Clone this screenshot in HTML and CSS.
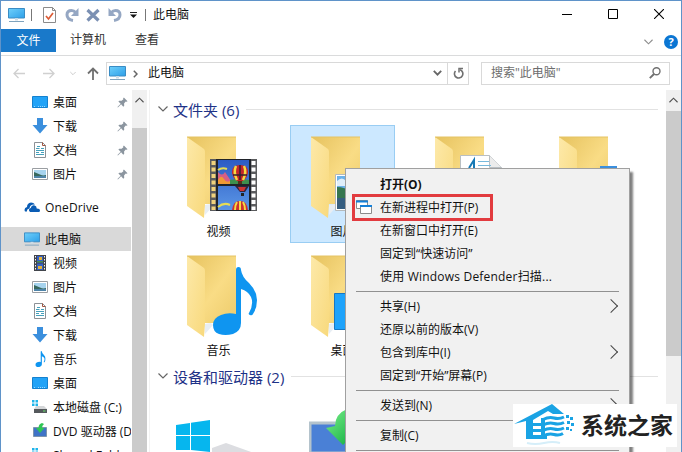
FILE: index.html
```
<!DOCTYPE html>
<html lang="zh-CN">
<head>
    <meta charset="UTF-8">
    <meta name="viewport" content="width=device-width, initial-scale=1.0">
    <title>此电脑</title>
    <link rel="stylesheet" href="styles.css">
</head>
<body>
<!-- shared icons -->
<svg class="defs" width="0" height="0">
    <defs>
        <linearGradient id="gBack" x1="0" y1="0" x2="1" y2="1">
            <stop offset="0" stop-color="#e6c25e"/><stop offset=".55" stop-color="#f9dc85"/><stop offset="1" stop-color="#edcb6b"/>
        </linearGradient>
        <linearGradient id="gFront" x1="0" y1="0" x2="1" y2="1">
            <stop offset="0" stop-color="#fde9a9"/><stop offset="1" stop-color="#f8d97c"/>
        </linearGradient>
        <linearGradient id="gScreen" x1="0" y1="0" x2="1" y2="1">
            <stop offset="0" stop-color="#6fd0fb"/><stop offset="1" stop-color="#2d9fe8"/>
        </linearGradient>
        <linearGradient id="gSky" x1="0" y1="0" x2="0" y2="1">
            <stop offset="0" stop-color="#2c5cc4"/><stop offset="1" stop-color="#5b96e6"/>
        </linearGradient>
        <linearGradient id="gGreen" x1="0" y1="0" x2="1" y2="1">
            <stop offset="0" stop-color="#7df08c"/><stop offset="1" stop-color="#06a83a"/>
        </linearGradient>
    </defs>
    <symbol id="folder" viewBox="0 0 72 84">
        <path d="M17 69l7-1 2 2-8 9z" fill="#e8eef4"/>
        <path d="M0 1h49v67H17z" fill="url(#gBack)"/>
        <path d="M0 1l17 12q1 1 1 3v52l-1 14L0 70z" fill="url(#gFront)"/>
        <path d="M0 1h49" stroke="#e4c365"/>
    </symbol>
    <symbol id="pc" viewBox="0 0 17 16">
        <path d="M.5 1.500h16v9.500H.5z" fill="url(#gScreen)" stroke="#3a8cc4"/>
        <path d="M7 11h3v2.500H7z" fill="#cbdbe6"/>
        <path d="M1 14.500h15" stroke="#7fa3bd"/>
    </symbol>
    <symbol id="desktop" viewBox="0 0 16 16">
        <path d="M.5 2.500h15v11H.5z" fill="#22a3f7" stroke="#1481cf"/>
        <path d="M2 12.500h2M6 12.500h8" stroke="#9ad8ff" stroke-dasharray="1 1"/>
    </symbol>
    <symbol id="download" viewBox="0 0 16 16">
        <path d="M5 0h6v7h4.500L8 15.500.5 7H5z" fill="#3b8fdd"/>
    </symbol>
    <symbol id="doc" viewBox="0 0 16 16">
        <path d="M2.500.5h8l3 3v12h-11z" fill="#fff" stroke="#8c9196"/>
        <path d="M10.500.5v3h3" fill="none" stroke="#a0543f"/>
        <path d="M5 4.500h3M4 6.500h3.500M9 6.500h3M4 8.500h8M4 10.500h3M9 10.500h3M4 12.500h8" stroke="#46a0bb"/>
    </symbol>
    <symbol id="picture" viewBox="0 0 16 16">
        <path d="M.5 2.500h15v11H.5z" fill="#fff" stroke="#9a9ea2"/>
        <path d="M2 4h12v8H2z" fill="#a6d3ee"/>
        <path d="M2 6q3 1 6 2.500t6 .5v3H2z" fill="#37685e"/>
        <path d="M2 10h12v2H2z" fill="#4d83a8"/>
    </symbol>
    <symbol id="video" viewBox="0 0 16 16">
        <path d="M2 0h12v16H2z" fill="#42454c"/>
        <path d="M3.500 1v15M12.500 1v15" stroke="#f3f3f3" stroke-dasharray="1.500 1.500"/>
        <path d="M5 1h6v6.500H5zM5 8.500h6V15H5z" fill="#3561c8"/>
        <path d="M7 2h3v3H7zM6 11h4v3H6z" fill="#e3b43a"/>
        <path d="M5 6h6v1.500H5z" fill="#4a8b52"/>
    </symbol>
    <symbol id="note" viewBox="0 0 44 68">
        <path d="M23 3q0-3 2.500-3T28 3q1 7 8 13 8 8 8 17 0 8-4 14-1 2-3 1t-1-2q5-9 2-16-3-6-10-8v34q0 8-8 11-8 2-14 0T0 58q0-7 8-10 7-3 15-1z" fill="#0f95f0"/>
    </symbol>
    <symbol id="pin" viewBox="0 0 12 12">
        <path d="M7.500.5l4 4-1 .8-1-.3-1.800 2 .2 2.500-1 1L4.500 8 1 11.500l-.5-.5L4 7.300 1.500 5l1-1 2.500.2 2-1.700-.4-1z" fill="#8b959f"/>
    </symbol>
    <symbol id="drive" viewBox="0 0 16 16">
        <path d="M0 1h2.500v2.500H0zM3.500 1H6v2.500H3.500zM0 4.500h2.500V7H0zM3.500 4.500H6V7H3.500z" fill="#1fb4ea"/>
        <path d="M4 7h8l3 3H2z" fill="#d4d6d8"/>
        <path d="M2 10h13v4H2z" fill="#55595c"/>
        <path d="M11 12h2.500" stroke="#66e26c"/>
    </symbol>
    <symbol id="dvd" viewBox="0 0 16 16">
        <path d="M1.500 4.500h13v9h-13z" fill="#3f73c6" stroke="#7d94ad"/>
        <path d="M10 0Q6.500 1 6.500 5H4l4 5 4.500-5H10q0-2.500 2-4z" fill="#2fc654"/>
    </symbol>
    <symbol id="chev" viewBox="0 0 10 6">
        <path d="M.5.5L5 5 9.500.5" fill="none" stroke="currentColor" stroke-width="1.200"/>
    </symbol>
</svg>

<div class="window">
    <header class="titlebar">
        <svg class="title-pc"><use href="#pc"/></svg>
        <span class="divider"></span>
        <svg class="title-check" viewBox="0 0 13 16">
            <path d="M.5.5h9l3 3v12H.5z" fill="#fff" stroke="#8b8b8b"/>
            <path d="M9.500.5v3h3" fill="none" stroke="#8b8b8b"/>
            <path d="M3 9l2.500 3L10 6" fill="none" stroke="#dc5b35" stroke-width="1.700"/>
        </svg>
        <svg class="title-redo" viewBox="0 0 14 14">
            <path d="M8 12.500Q2 11.500 2 6.800 2 2.500 6.500 2.500q2.500 0 4 2" fill="none" stroke="#95a7c3" stroke-width="3"/>
            <path d="M13.500 0v8H6z" fill="#95a7c3"/>
        </svg>
        <svg class="title-x" viewBox="0 0 14 14"><path d="M1.500 2l11 10.500M12.500 2l-11 10.500" stroke="#7b90b3" stroke-width="3.200"/></svg>
        <svg class="title-undo" viewBox="0 0 14 14">
            <path d="M6 12.500q6-1 6-5.700 0-4.300-4.500-4.300-2.500 0-4 2" fill="none" stroke="#95a7c3" stroke-width="3"/>
            <path d="M.5 0v8H8z" fill="#95a7c3"/>
        </svg>
        <svg class="title-drop" viewBox="0 0 7 7"><path d="M0 .5h7" stroke="#222"/><path d="M0 2.500h7L3.500 6z" fill="#111"/></svg>
        <span class="divider"></span>
        <span class="title">此电脑</span>
        <div class="controls">
            <svg viewBox="0 0 10 10"><path d="M0 5.500h10" stroke="#000"/></svg>
            <svg viewBox="0 0 10 10"><path d="M.5.5h9v9h-9z" fill="none" stroke="#000"/></svg>
            <svg viewBox="0 0 10 10"><path d="M0 0l10 10M10 0L0 10" stroke="#000" stroke-width="1.100"/></svg>
        </div>
    </header>

    <nav class="ribbon">
        <span class="tab tab-file">文件</span>
        <span class="tab">计算机</span>
        <span class="tab">查看</span>
        <svg class="ribbon-toggle"><use href="#chev"/></svg>
        <span class="help">?</span>
    </nav>

    <div class="addressbar">
        <svg class="arrow-back" viewBox="0 0 12 11"><path d="M12 5.500H1M5.500 1L1 5.500 5.500 10" fill="none" stroke="#d0d0d0" stroke-width="1.300"/></svg>
        <svg class="arrow-forward" viewBox="0 0 12 11"><path d="M0 5.500h11M6.500 1L11 5.500 6.500 10" fill="none" stroke="#d0d0d0" stroke-width="1.300"/></svg>
        <svg class="arrow-recent"><use href="#chev"/></svg>
        <svg class="arrow-up" viewBox="0 0 12 13"><path d="M6 13V1.500M1 6.500l5-5 5 5" fill="none" stroke="#707070" stroke-width="1.800"/></svg>
        <div class="address">
            <svg class="address-pc"><use href="#pc"/></svg>
            <svg class="address-sep" viewBox="0 0 5 8"><path d="M.8.8L4 4 .8 7.200" fill="none" stroke="#666" stroke-width="1.500"/></svg>
            <span>此电脑</span>
            <svg class="address-drop" viewBox="0 0 9 6"><path d="M.8.8l3.700 3.900L8.200.8" fill="none" stroke="#666" stroke-width="1.800"/></svg>
            <span class="refresh"><svg viewBox="0 0 11 12"><path d="M2.500 4A4.200 4.200 0 1 0 7 2.800" fill="none" stroke="#707070" stroke-width="1.600"/><path d="M10 1.500H6v4" fill="none" stroke="#707070" stroke-width="1.500"/></svg></span>
        </div>
        <div class="search">
            <span>搜索"此电脑"</span>
            <svg viewBox="0 0 12 12"><circle cx="7.500" cy="4.300" r="3.500" fill="none" stroke="#707070" stroke-width="1.400"/><path d="M5 7L.8 11.200" stroke="#707070" stroke-width="1.900"/></svg>
        </div>
    </div>

    <div class="body">
        <aside class="sidebar">
            <div class="node sub"><svg><use href="#desktop"/></svg>桌面<svg class="pin"><use href="#pin"/></svg></div>
            <div class="node sub"><svg><use href="#download"/></svg>下载<svg class="pin"><use href="#pin"/></svg></div>
            <div class="node sub"><svg><use href="#doc"/></svg>文档<svg class="pin"><use href="#pin"/></svg></div>
            <div class="node sub"><svg><use href="#picture"/></svg>图片<svg class="pin"><use href="#pin"/></svg></div>
            <div class="node root onedrive">
                <svg viewBox="0 0 16 16"><path d="M1 12.500Q-.5 9 3 8q0-4 4-4.500 2.500 0 4 2-5-.5-5.500 4Q2.500 10 3 12.500z" fill="#0a5cb4"/><path d="M6 13q-2.500-2.500.7-4 1-3.500 4-2.500 2 .5 2 3 3.300 0 3.300 2T14 13z" fill="#0a5cb4"/></svg>OneDrive
            </div>
            <div class="node root active"><svg><use href="#pc"/></svg>此电脑</div>
            <div class="node sub"><svg><use href="#video"/></svg>视频</div>
            <div class="node sub"><svg><use href="#picture"/></svg>图片</div>
            <div class="node sub"><svg><use href="#doc"/></svg>文档</div>
            <div class="node sub"><svg><use href="#download"/></svg>下载</div>
            <div class="node sub"><svg viewBox="-10 0 60 68"><use href="#note" width="44" height="68"/></svg>音乐</div>
            <div class="node sub"><svg><use href="#desktop"/></svg>桌面</div>
            <div class="node sub"><svg><use href="#drive"/></svg>本地磁盘 (C:)</div>
            <div class="node sub"><svg><use href="#dvd"/></svg>DVD 驱动器 (D:)</div>
            <div class="node sub"><svg><use href="#drive"/></svg>Shared Folders</div>
        </aside>
        <div class="scrollbar side-scroll">
            <svg class="scroll-up"><use href="#chev"/></svg>
            <div class="thumb"></div>
        </div>

        <main class="content">
            <h2 class="group"><svg><use href="#chev"/></svg>文件夹 (6)</h2>
            <div class="tiles">
                <div class="tile">
                    <svg class="tile-icon" viewBox="0 0 72 84">
                        <use href="#folder" width="72" height="84"/>
                        <path d="M23 23h47v52H23z" fill="#5a5b5d"/>
                        <path d="M26.500 25v49" stroke="#f0d27c" stroke-width="4" stroke-dasharray="4 2.500"/>
                        <path d="M66.500 25v49" stroke="#fff" stroke-width="4" stroke-dasharray="4 2.500"/>
                        <path d="M29 23h35v52H29z" fill="#202329"/>
                        <path d="M31 24h31v24H31zM31 50h31v24H31z" fill="url(#gSky)"/>
                        <path d="M31 36q4 5 7 0l6 9v3H31z" fill="#d65f86"/>
                        <path d="M31 44q3-6 6-1t7 1v4H31z" fill="#f09a35"/>
                        <path d="M43 44q10-2 19 0v4H43z" fill="#3e8f4e"/>
                        <path d="M31 34q4-3 9-1M31 71q6-5 12-2" fill="none" stroke="#e6dc55" stroke-width="2"/>
                        <path d="M45 36q0-7 8-7t8 7q0 5-5 9h-6q-5-4-5-9z" fill="#c5252b"/>
                        <path d="M49 30q-3 6 1 14M57 30q3 6-1 14" fill="none" stroke="#f6da42" stroke-width="2.500"/>
                        <path d="M53 29v15M46 39h14" stroke="#35232d" stroke-width="1.500"/>
                        <path d="M51 45h4v3h-4z" fill="#553018"/>
                        <path d="M48 50h14l-4 6h-5z" fill="#30243d"/>
                        <path d="M51 51h8l-2 4h-4z" fill="#cd3434"/>
                        <path d="M54 57h3v3h-3z" fill="#222"/>
                        <path d="M45 74q1-9 8-9t8 9z" fill="#cd3032"/>
                        <path d="M48 74q0-5 2-8M53 65v9M58 74q0-5-2-8" fill="none" stroke="#f5db42" stroke-width="2"/>
                    </svg>
                    视频
                </div>
                <div class="tile selected">
                    <svg class="tile-icon" viewBox="0 0 72 84">
                        <use href="#folder" width="72" height="84"/>
                        <path d="M24.500 38.500h48v36h-48z" fill="#fff" stroke="#b5b9bb"/>
                        <path d="M26 40h46v33H26z" fill="#6bb1e9"/>
                        <path d="M26 45q5-5 9 0t8 1v4H26z" fill="#e0eef9"/>
                        <path d="M26 51q8 0 14 5t16 2v15H26z" fill="#36764f"/>
                        <path d="M26 62h46v11H26z" fill="#365e80"/>
                    </svg>
                    图片
                </div>
                <div class="tile">
                    <svg class="tile-icon" viewBox="0 0 72 84">
                        <use href="#folder" width="72" height="84"/>
                        <path d="M25.500 19.500h29l12 12v42h-41z" fill="#fff" stroke="#b9bfc3"/>
                        <path d="M54.500 19.500v12h12" fill="#ececec" stroke="#b9bfc3"/>
                        <path d="M43 25.500h11M43 29.500h13" stroke="#77b9dc"/>
                        <path d="M34 32l5-8v8" fill="none" stroke="#1779b5" stroke-width="2"/>
                    </svg>
                </div>
                <div class="tile">
                    <svg class="tile-icon" viewBox="0 0 72 84">
                        <use href="#folder" width="72" height="84"/>
                        <path d="M41 30h17v20h8L49.500 72 33 50h8z" fill="#3b8fdd"/>
                    </svg>
                </div>
                <div class="tile">
                    <svg class="tile-icon" viewBox="0 0 72 84">
                        <use href="#folder" width="72" height="84"/>
                        <use href="#note" x="26" y="12" width="44" height="68"/>
                    </svg>
                    音乐
                </div>
                <div class="tile">
                    <svg class="tile-icon" viewBox="0 0 72 84">
                        <use href="#folder" width="72" height="84"/>
                        <path d="M23.500 38.500h48v36h-48z" fill="#1ea3fb" stroke="#1677c4"/>
                    </svg>
                    桌面
                </div>
            </div>
            <h2 class="group"><svg><use href="#chev"/></svg>设备和驱动器 (2)</h2>
            <div class="tiles devices">
                <svg class="disk" viewBox="0 0 90 40">
                    <path d="M0 7l14-2v12H0zM15 4.800L34 2v15H15zM0 18h14v14H0zM15 18h19v16l-19-2z" fill="#06b6ee"/>
                    <path d="M36 30l14-5 28 10H36z" fill="#dcdde1"/>
                </svg>
                <svg class="disc" viewBox="0 0 60 44">
                    <path d="M1 15h58v30H1z" fill="#4a80d6" stroke="#b4c3cc" stroke-width="3"/>
                    <path d="M38 1Q26 6 26 18l-9 2 17 17 16-16H38z" fill="url(#gGreen)"/>
                </svg>
            </div>
        </main>
        <div class="scrollbar main-scroll">
            <svg class="scroll-up"><use href="#chev"/></svg>
            <div class="thumb"></div>
        </div>
    </div>

    <div class="menu">
        <div class="item default">打开(O)</div>
        <div class="item marked">
            <svg class="item-icon" viewBox="0 0 16 15">
                <path d="M.5.500h11v8H.5z" fill="#fff" stroke="#8b8b8b"/><path d="M0 1.500h12" stroke="#1580d8" stroke-width="2"/>
                <path d="M4.500 5.500h11v8h-11z" fill="#fff" stroke="#8b8b8b"/><path d="M4 6h12" stroke="#1580d8" stroke-width="2"/>
            </svg>在新进程中打开(P)
        </div>
        <div class="item">在新窗口中打开(E)</div>
        <div class="item">固定到“快速访问”</div>
        <div class="item defender">使用 Windows Defender扫描...</div>
        <div class="sep"></div>
        <div class="item more">共享(H)</div>
        <div class="item">还原以前的版本(V)</div>
        <div class="item more">包含到库中(I)</div>
        <div class="item">固定到“开始”屏幕(P)</div>
        <div class="sep"></div>
        <div class="item more">发送到(N)</div>
        <div class="sep"></div>
        <div class="item">复制(C)</div>
        <div class="sep"></div>
    </div>

    <div class="badge">
        <svg viewBox="0 0 62 43">
            <path d="M0 20L38 0l12 10H39l-5-3-15 9v3h11v3H19v3h9v3h-9v3h14v4H12V17z" fill="#1aa3e4"/>
            <path d="M27 14h4v17h-4z" fill="#1aa3e4"/>
            <path d="M29 15.500q6-3 11-1.500t10-1M29 21q6-3 11-1.500t10-1M29 26.500q6-3 11-1.500t10-1M29 32q6-3 11-1.500t9-1" fill="none" stroke="#1aa3e4" stroke-width="3"/>
            <path d="M52 11h3v3h-3zM56 13h3v3h-3zM53 17h3v3h-3zM57 19h3v3h-3zM52 23h3v3h-3zM56 25h2v2h-2z" fill="#1aa3e4"/>
            <path d="M13 39q8 2 17 0t16 0" fill="none" stroke="#d5eef9" stroke-width="2"/>
        </svg>
        <span>系统之家</span>
    </div>
</div>
</body>
</html>
```
FILE: styles.css
```
* {
    box-sizing: border-box;
}
body {
    margin: 0;
    font-family: "Open Sans", "Noto Sans CJK SC", sans-serif;
    font-size: 12px;
    color: #111;
    overflow: hidden;
}
svg {
    display: block;
    flex: none;
}
.defs {
    position: absolute;
}
.window {
    position: relative;
    width: 682px;
    height: 452px;
    border: 1px solid #5f93c9;
    border-bottom: 0;
    background-color: #fff;
    overflow: hidden;
    display: flex;
    flex-direction: column;
    white-space: nowrap;
}

/* title bar */
.titlebar {
    flex: none;
    display: flex;
    align-items: center;
    height: 27px;
    padding-left: 7px;
}
.title-pc {
    width: 17px;
    height: 16px;
}
.divider {
    width: 1px;
    height: 12px;
    background-color: #777;
    margin: 0 11px 0 6px;
}
.title-check {
    width: 13px;
    height: 16px;
}
.title-redo, .title-x, .title-undo {
    width: 14px;
    height: 14px;
    margin-left: 9px;
}
.title-x {
    margin-left: 7px;
}
.title-undo {
    margin-left: 8px;
}
.title-drop {
    width: 7px;
    height: 7px;
    margin: 2px 0 0 8px;
}
.titlebar .title-drop + .divider {
    margin: 0 7px 0 8px;
}
.title {
    margin-top: -2px;
}
.controls {
    display: flex;
    gap: 36px;
    margin: -2px 0 0 auto;
    padding-right: 17px;
}
.controls svg {
    width: 10px;
    height: 10px;
}

/* ribbon */
.ribbon {
    flex: none;
    display: flex;
    align-items: center;
    height: 28px;
    padding-bottom: 3px;
    border-bottom: 1px solid #dadbdc;
    color: #333;
}
.tab {
    line-height: 24px;
    margin-left: 29px;
}
.tab:nth-child(2) {
    margin-left: 14px;
}
.tab-file {
    width: 55px;
    height: 23px;
    line-height: 23px;
    margin-left: 0;
    text-align: center;
    background-color: #1979ca;
    color: #fff;
}
.ribbon-toggle {
    width: 9px;
    height: 6px;
    margin-left: auto;
    margin-top: 4px;
    color: #8d8d8d;
}
.help {
    width: 14px;
    height: 14px;
    border-radius: 50%;
    margin: 4px 3px 0 11px;
    background-color: #0b76d3;
    color: #fff;
    font-weight: bold;
    font-size: 11px;
    line-height: 14px;
    text-align: center;
}

/* address bar */
.addressbar {
    flex: none;
    display: flex;
    align-items: center;
    height: 34px;
    padding-left: 12px;
}
.arrow-back, .arrow-forward {
    width: 12px;
    height: 11px;
}
.arrow-forward {
    margin-left: 18px;
}
.arrow-recent {
    width: 6px;
    height: 5px;
    margin-left: 15px;
    color: #bbb;
}
.arrow-up {
    width: 12px;
    height: 13px;
    margin-left: 11px;
}
.address {
    display: flex;
    align-items: center;
    width: 363px;
    height: 23px;
    border: 1px solid #d9d9d9;
    margin-left: 7px;
}
.address span, .search span {
    margin-top: -2px;
}
.address-pc {
    width: 17px;
    height: 16px;
    margin-left: 2px;
}
.address-sep {
    width: 5px;
    height: 8px;
    margin: 1px 10px 0 7px;
}
.address-drop {
    width: 9px;
    height: 6px;
    margin-left: auto;
    margin-right: 5px;
}
.address .refresh {
    display: flex;
    align-items: center;
    justify-content: center;
    width: 21px;
    height: 21px;
    margin-top: 0;
    border-left: 1px solid #d9d9d9;
}
.refresh svg {
    width: 11px;
    height: 12px;
}
.search {
    display: flex;
    align-items: center;
    justify-content: space-between;
    width: 189px;
    height: 23px;
    border: 1px solid #d9d9d9;
    margin-left: 12px;
    padding: 0 8px 0 9px;
    color: #6d6d6d;
}
.search svg {
    width: 12px;
    height: 12px;
}

/* panes */
.body {
    flex: 1;
    display: flex;
    min-height: 0;
}
.sidebar {
    width: 130px;
    overflow: hidden;
}
.node {
    display: flex;
    align-items: center;
    height: 24px;
    gap: 5px;
}
.node svg {
    width: 16px;
    height: 16px;
}
.sub {
    padding-left: 31px;
}
.root {
    padding-left: 23px;
}
.onedrive {
    margin: 9px 0 8px;
    letter-spacing: .15px;
}
.active {
    background-color: #d9d9d9;
}
.node .pin {
    width: 11px;
    height: 11px;
    margin-left: auto;
    margin-right: 3px;
}
.scrollbar {
    flex: none;
    background-color: #f0f0f0;
}
.scroll-up {
    width: 9px;
    height: 6px;
    transform: rotate(180deg);
    color: #505050;
    margin: 7px auto 0;
}
.thumb {
    background-color: #cbcbcb;
}
.side-scroll {
    width: 15px;
    margin-left: 1px;
}
.side-scroll .thumb {
    height: 340px;
    margin-top: 25px;
}
.main-scroll {
    width: 15px;
}
.main-scroll .thumb {
    height: 245px;
    margin-top: 8px;
}
.content {
    flex: 1;
    min-width: 0;
    overflow: hidden;
    padding-left: 8px;
    border-left: 1px solid #f2f2f2;
    margin-left: 2px;
}
.group {
    display: flex;
    align-items: center;
    height: 22px;
    margin: 8px 8px 0 0;
    font-size: 15px;
    font-weight: normal;
    color: #1e3287;
}
.group svg {
    width: 10px;
    height: 6px;
    margin-right: 5px;
    color: #666;
}
.group::after {
    content: "";
    flex: 1;
    height: 1px;
    background-color: #e2e2e2;
    margin-left: 7px;
}
.tiles {
    display: grid;
    grid-template-columns: repeat(4, 105px);
    column-gap: 19px;
    row-gap: 1px;
    padding: 5px 0 0 8px;
}
.tile {
    height: 118px;
    padding-top: 12px;
    line-height: 18px;
    text-align: center;
    border: 1px solid transparent;
}
.tile-icon {
    width: 72px;
    height: 84px;
    margin: -2px 0 3px 20px;
}
.selected {
    background-color: #cce8ff;
    border-color: #99cdf3;
}
.tiles + .group {
    margin-top: 3px;
}
.devices {
    display: flex;
    gap: 43px;
    padding: 31px 0 0 18px;
}
.disk {
    width: 90px;
    height: 40px;
}
.disc {
    width: 60px;
    height: 44px;
    margin-top: -10px;
}

/* context menu */
.menu {
    position: absolute;
    left: 344px;
    top: 167px;
    width: 285px;
    height: 300px;
    padding-top: 4px;
    background-color: #f1f1f1;
    border: 1px solid #a0a0a0;
    box-shadow: 3px 4px 2px rgba(0, 0, 0, .5);
}
.item {
    display: flex;
    align-items: center;
    height: 23px;
    padding: 0 0 1px 34px;
}
.default {
    font-weight: bold;
}
.defender {
    letter-spacing: .2px;
}
.marked {
    height: 27px;
    width: 141px;
    margin: -2px 0 -2px 6px;
    padding-left: 1px;
    border: 3px solid #e23b3f;
}
.item-icon {
    width: 16px;
    height: 15px;
    margin-right: 8px;
}
.more::after {
    content: "";
    width: 9px;
    height: 9px;
    border: solid #444;
    border-width: 1px 1px 0 0;
    transform: rotate(45deg);
    margin-left: auto;
    margin-right: 13px;
}
.sep {
    height: 1px;
    background-color: #919191;
    margin: 3px 10px;
}

/* site badge */
.badge {
    position: absolute;
    left: 512px;
    top: 403px;
    width: 164px;
    height: 43px;
    display: flex;
    align-items: center;
    background-color: #fff;
}
.badge svg {
    width: 62px;
    height: 43px;
    margin-left: 1px;
}
.badge span {
    font-size: 23px;
    font-weight: bold;
    line-height: 40px;
    margin: -2px 0 0 5px;
    color: #222;
}
```
